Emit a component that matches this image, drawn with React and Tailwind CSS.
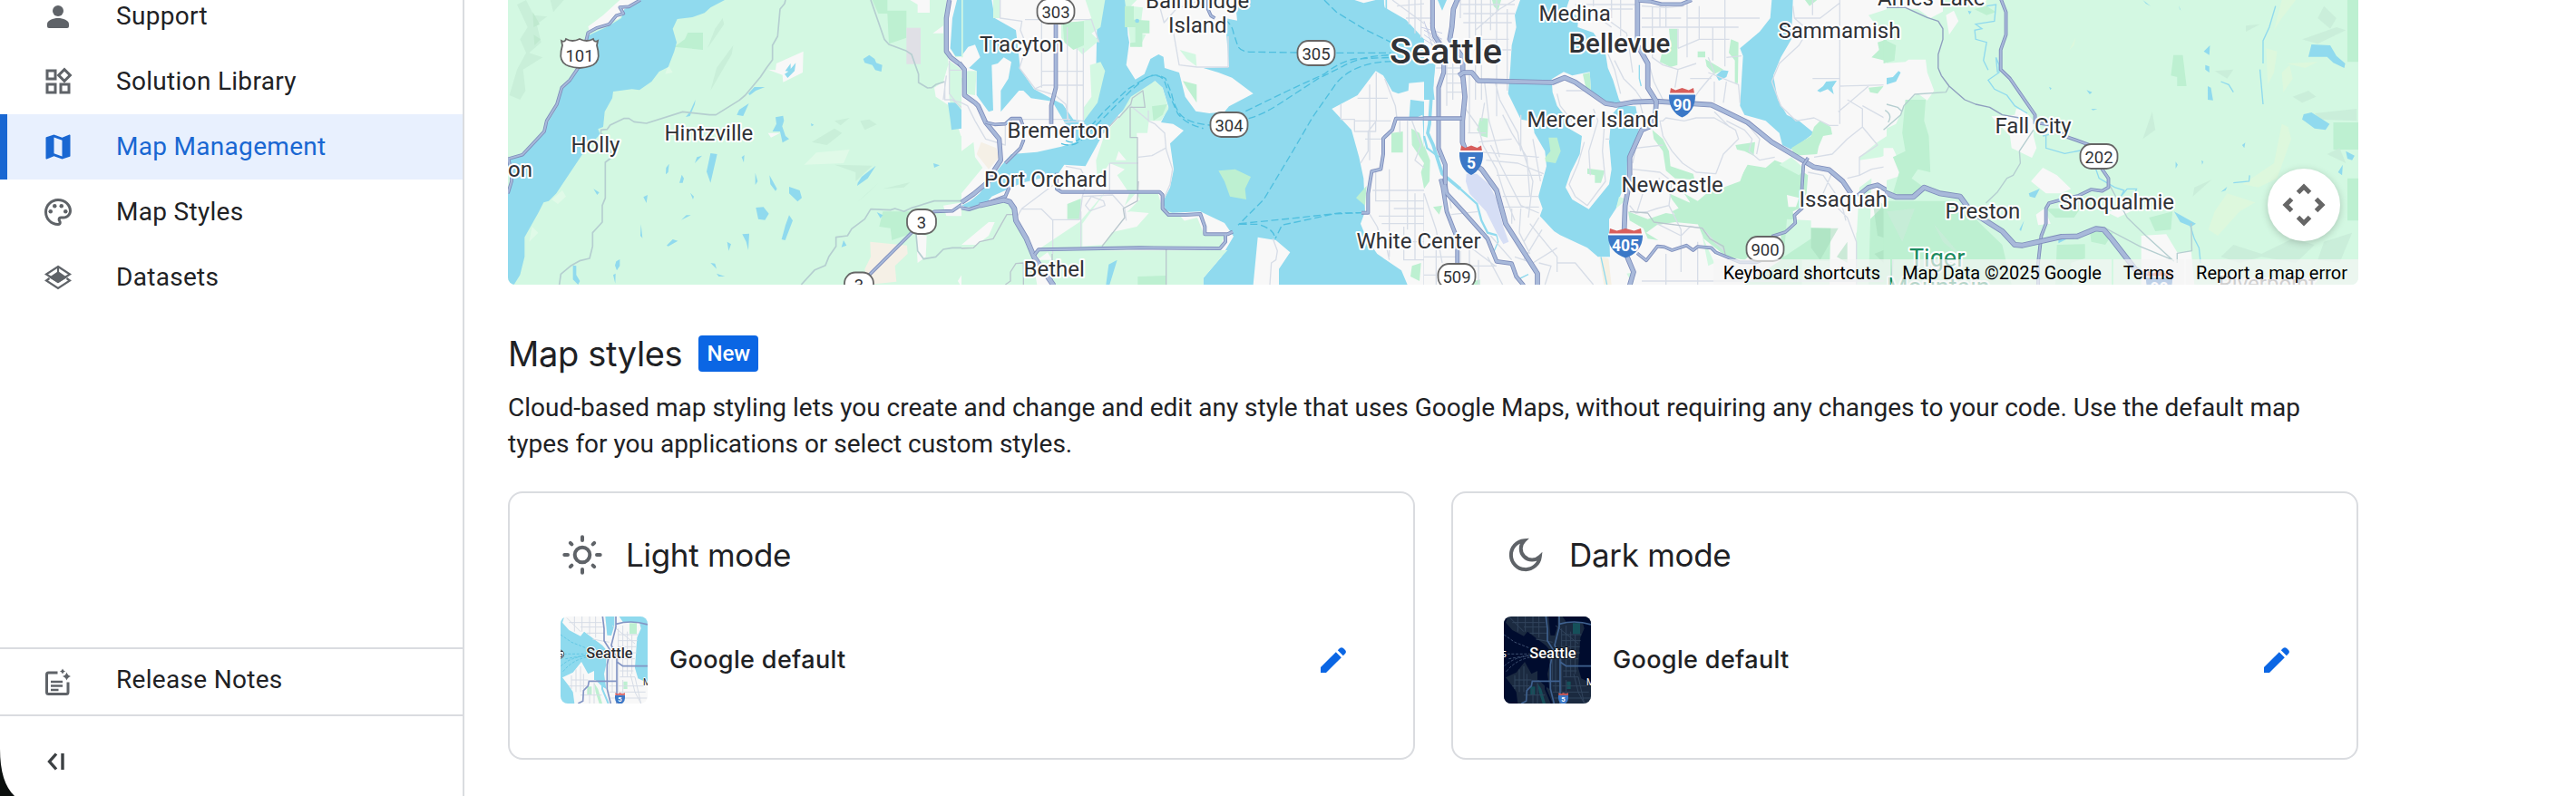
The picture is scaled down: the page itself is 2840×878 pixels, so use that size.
import { MdMap, MdOutlinePalette, MdOutlineWidgets } from 'react-icons/md';

const WATER = '#90daee';
const LAND = '#f8f8f8';
const GREEN = '#d3f8e2';
const PARK = '#bdf0d1';

/* ---------- icons ---------- */

const PersonIcon = () => (
  <svg viewBox="0 0 36 36" className="size-9" fill="currentColor">
    <circle cx="18" cy="12" r="6" />
    <path d="M6 29v-2.500c0-4 6.500-6.500 12-6.500s12 2.500 12 6.500V29a2 2 0 0 1-2 2H8a2 2 0 0 1-2-2Z" />
  </svg>
);

const DatasetsIcon = () => (
  <svg viewBox="0 0 36 36" className="size-9" fill="none" stroke="currentColor" strokeWidth="2.200">
    <path d="m18 6 13 8.500-13 8.500-13-8.500Z" />
    <path d="m8.500 19-3.500 2.500L18 30l13-8.500-3.500-2.500" />
    <path d="M18 6v8" />
    <path d="m18 12.500 8 5.500-8 5-8-5Z" fill="currentColor" />
  </svg>
);

const ReleaseIcon = () => (
  <svg viewBox="0 0 36 36" className="size-9" fill="none" stroke="currentColor" strokeWidth="3">
    <path d="M18 8.500H8a2 2 0 0 0-2 2V30a2 2 0 0 0 2 2h19.500a2 2 0 0 0 2-2V19" transform="translate(-.5 -.5)" />
    <path d="M10 18h13M10 22.500h13M10 27h8.500" strokeWidth="2.600" />
    <path d="M27.500 7.500q1 3.500 4.500 4.500-3.500 1-4.500 4.500-1-3.500-4.500-4.500 3.500-1 4.500-4.500ZM23 3.500q.7 2.300 3 3-2.300.7-3 3-.7-2.300-3-3 2.300-.7 3-3Z" fill="currentColor" stroke="none" />
  </svg>
);

const CollapseIcon = () => (
  <svg viewBox="0 0 20 20" className="size-5" fill="none" stroke="currentColor" strokeWidth="3.400">
    <path d="M10 1.500 2.500 10l7.500 8.500M17 1v18" />
  </svg>
);

const SunIcon = () => (
  <svg viewBox="-24 -24 48 48" className="size-12" fill="none" stroke="currentColor" strokeWidth="4" strokeLinecap="round">
    <circle r="8.300" />
    <path d="M0-19.700v3.700M0 16v3.700M-19.700 0h3.700M16 0h3.700M-13.200-13.200l1.600 1.600M13.200-13.200l-1.600 1.600M-13.200 13.200l1.600-1.600M13.200 13.200l-1.600-1.600" />
  </svg>
);

const MoonIcon = () => (
  <svg viewBox="-24 -24 48 48" className="size-12" fill="none" stroke="currentColor" strokeWidth="4">
    <path d="M-1.500-15.800A16 16 0 1 0 15.800 2 A11.800 11.800 0 0 1-1.500-15.800Z" />
  </svg>
);

const PencilIcon = () => (
  <svg viewBox="0 0 28 28" className="size-7 text-[#0b66e4]" fill="currentColor">
    <path d="M0 28v-6L16.800 5.200l6 6L6 28Z" />
    <path d="m18.800 3.200 2.200-2.100q2-1.800 4 0l2 2q1.800 2 0 4l-2.200 2.100Z" />
  </svg>
);

/* ---------- map pieces ---------- */

const Highway = ({ d, w = 12 }) => (
  <g fill="none" strokeLinejoin="round">
    <path d={d} stroke="#7d8cba" strokeWidth={w} />
    <path d={d} stroke="#a8b9da" strokeWidth={w - 5} />
  </g>
);

const Minor = ({ d, color = '#d7dde7', w = 4 }) => (
  <path d={d} fill="none" stroke={color} strokeWidth={w} strokeLinejoin="round" />
);

const Ferry = ({ d }) => (
  <path d={d} fill="none" stroke="#4fbfdf" strokeWidth="4" strokeDasharray="24 11" />
);

const WestTile = () => (
  <g transform="translate(550 0) scale(.33333)">
    <path fill={GREEN} d="M30 0H1562V942H30Z" />
    <path fill="#c9efd9" d="M60 15 90 0 115 50 160 55 125 80 140 140 100 175 145 190 80 230 88 300 70 330 35 315 60 230 90 175 70 130 95 90ZM170 0 215 0 180 40ZM1110 400 1160 390 1130 415ZM1035 470 1110 425 1135 440 1085 480ZM1110 545 1235 548 1180 600 1180 570ZM740 60 745 80 690 160 715 95ZM775 150 770 180 700 300 720 225ZM1195 400 1225 395 1250 412 1210 430ZM1480 440 1450 500 1445 520ZM1255 605 1185 670 1220 640ZM1360 603 1270 625 1340 620Z" />
    <path fill="#e0fae8" d="M1050 505 1160 495 1140 540 1010 545ZM210 630 222 650 195 675 175 660ZM110 750 130 770 100 800ZM560 215 575 240 550 245Z" />
    <path fill="#bfe9cf" d="M112 40 135 80 115 90ZM115 115 138 130 118 150Z" />
    <path fill={PARK} d="M625 108H675V165L580 155 615 130ZM1235 0H1285V35H1348V125L1290 145 1285 45 1255 45ZM1270 700 1380 700 1370 770 1300 795 1295 755 1258 750Z" />
    <path fill={LAND} d="M400 0H466L395 62 300 105 295 88 345 50ZM1360 0H1425V42H1385V15ZM890 230 915 232 918 210 1007 170 1005 240 940 272 938 248ZM1470 85 1470 110 1435 110ZM1480 0H1520L1495 160 1510 190 1560 185V942H1525L1515 925 1555 860 1560 840V340L1540 315 1530 230 1490 200 1470 270 1440 290 1445 320 1490 350 1495 380 1540 440 1560 460 1560 720 1480 715 1470 680 1560 665 1560 640 1470 600 1560 550 1490 330ZM1530 490 1548 495 1545 535 1525 530ZM1380 775 1415 780 1412 850 1385 870ZM890 440 930 440 900 455Z" />
    <path fill={GREEN} d="M1562 470V660L1440 668V440L1495 430ZM1562 715V860L1510 942H1430L1420 850 1440 715Z" />
    <path fill="#e0e0e6" d="M1348 92H1395V212H1348Z" />
    <path fill="#f5f0e6" d="M1228 800 1350 812 1352 840 1310 880 1315 932 1220 942 1210 890 1230 850Z" />
    <path fill={WATER} d="M466 0H747L700 25 680 43 640 57 590 63 575 95 588 140 580 170 560 222 530 237 505 270 465 298 440 295 378 303 375 325 350 370 345 420 328 427 335 445 300 480 275 512 230 580 190 640 165 665 148 670 130 705 85 785 85 850 70 910 50 942H30V640L45 600 35 575 30 525 78 512 148 440 165 400 195 350 208 290 235 270 262 230 290 180 295 118 360 88 405 60 415 30 440 20Z" />
    <path fill={WATER} d="M1515 0H1562V160L1545 187 1510 185 1493 160 1500 60ZM1485 340 1510 340 1535 370 1530 425 1497 430 1493 395ZM1205 195 1225 182 1243 195 1248 208 1268 215 1265 237 1245 232 1235 215 1210 208ZM947 235 965 210 965 228 982 208 978 235 955 258 945 245 958 236ZM825 310 845 288 880 288 850 300 830 315ZM827 342 795 363 787 380 808 384ZM650 330 632 370 618 387 632 384 648 345ZM915 388 940 383 943 400 937 418 948 450 960 460 938 472 930 435 905 435 918 410ZM700 507 722 510 700 605 687 568ZM648 540 655 520 672 515ZM553 555 563 542 560 570 552 577ZM605 578 612 590 608 605 597 605ZM803 520 812 513 810 538ZM895 580 920 625 915 632 898 610ZM848 572 856 600 848 612ZM960 618 995 630 1002 655 988 667 960 640ZM850 687 875 685 893 707 880 728 858 725ZM960 712 972 730 947 795 935 792 948 745ZM805 775 828 773 825 828 818 800ZM555 812 575 792 592 797 560 815ZM603 728 620 712 635 712ZM313 625 332 637 325 645ZM388 865 400 858 400 880 390 895 384 878ZM700 870 715 872 720 890ZM470 742 475 788 468 780ZM245 878 256 880 256 910 268 930 262 942 245 925ZM378 910 386 905 385 938ZM720 905 748 915 727 915ZM1250 702 1270 712 1262 722ZM1140 795 1150 812 1133 818ZM1187 605 1200 585 1247 548 1220 590 1185 615ZM1437 540 1458 547 1440 555ZM478 652 492 645 488 672ZM755 800 768 808 760 830ZM633 638 645 650 642 660ZM1032 408 1042 413 1034 418Z" />
    <Minor color="#b5ced0" w={5} d="M948 0 945 12 930 30 922 120 905 150V198L885 225 865 255 815 315 795 332 718 380H697L608 370 488 408 447 403 430 392H413L368 414 358 428 338 430 337 440 375 480 368 525 352 537V655L342 680V735L310 770V815L300 855 267 863 240 878 205 907 200 942M1230 0 1275 130 1290 147 1345 167 1365 180 1388 245V273L1418 291 1432 290 1445 280 1475 270M1000 942 1045 893 1080 878 1092 848 1115 815V785L1153 780 1167 757 1210 725 1230 692 1295 695 1310 690 1340 700 1365 688 1440 665H1562M1380 775 1385 830 1405 857 1445 850 1470 825 1500 820H1562" />
    <Minor d="M1490 200V310L1510 335 1555 345M1490 232H1560M1475 270V330H1500L1560 380M1480 250 1470 330" />
    <Highway d="M468 0 430 22 400 24 412 45 388 52 365 80 325 92 295 108 285 150 262 225 235 265 208 290 192 345 158 400 150 435 78 512 30 526M32 528 42 570V600L30 640" w={11} />
    <Highway d="M1490 0 1480 60V170L1495 190 1540 225V310L1565 333" w={16} />
    <Highway d="M1562 655 1500 698 1440 700 1370 765 1215 920M1520 680 1562 693" w={11} />
  </g>
);

const SoundTile = () => (
  <g transform="translate(1060 0) scale(.33333)">
    <path fill={WATER} d="M0 0H1562V942H0Z" />
    <path fill={LAND} d="M100 0H475L455 150 475 235 440 330 405 400 370 395 335 345 305 330 240 295 195 230 180 100 110 60ZM540 0H905L912 68 872 60 885 222 800 225 850 240 895 257 965 310 885 352 870 370 820 375 775 368 740 320 720 240 672 225 668 188 652 180 625 195 605 245 575 263 545 215 555 140 540 60ZM0 185 22 155 45 148 62 190 25 225 50 235 50 315 90 370 105 365 100 215 120 210 140 190 165 205 155 260 130 300 130 370 190 300 205 300 230 325 300 335 350 420 370 440 380 470 330 485 250 503 165 510 130 550 60 640 0 690ZM0 690 60 680 100 640 200 605 320 575 340 545 410 550 470 440 520 380 600 300 640 268 665 290 685 355 660 405 700 410 735 432 690 475 702 560 690 620 665 670 680 705 790 700 870 738 900 782 860 850 800 920V942H0ZM1370 235 1395 250 1425 302 1445 310 1478 300 1480 275 1562 268V942H1475L1455 895 1375 840 1340 790 1320 740 1335 700 1330 590 1315 520 1290 430 1225 360 1310 315ZM1395 0H1562V150L1530 130 1470 65 1400 25ZM980 785 1040 795 1087 835 1050 890V942H965ZM1300 0H1370L1330 10Z" />
    <path fill={WATER} d="M1485 330 1562 340V450L1540 450 1560 500 1530 490 1525 380 1480 400ZM450 0H545L550 110 530 210 480 250 440 330 445 240Z" />
    <path fill={GREEN} d="M0 0H5V190H0ZM105 0H128V60H105ZM410 0 475 0 460 90 430 110 455 135 400 180 380 160 330 130 330 80 400 70 430 60ZM425 215 460 205 475 235 450 340 405 400 405 355 430 320ZM560 320 640 268 665 290 685 360 660 400 620 400 615 440 580 440 585 630 540 680 555 640 515 580 540 560 490 540 450 600 445 530 475 440 520 390ZM0 500 40 470 45 520 70 555 0 640ZM0 690 130 660 160 670 185 740 230 830 250 942H0ZM255 825 390 735 480 630 400 740 400 815 465 810 640 650 660 700 720 710 820 830 790 820 270 835ZM465 815 530 720 590 660 580 640 650 640 665 690 720 715 700 740 600 800ZM700 740 780 720 800 770 870 780 855 820 590 812ZM240 830 880 828 860 850 800 920V942H310ZM540 0H580L560 20 600 25 590 110 610 115 590 155 560 150ZM20 235 50 235 45 315 5 310 0 260ZM722 165 775 180 778 220 745 195Z" />
    <path fill={PARK} d="M335 75 405 70V150L370 165 340 140ZM540 20 570 20 570 65 622 68V110H598V155H558V142L575 140V90H540ZM732 268 778 280V340L745 290ZM350 675 395 657V725H350ZM1422 440 1460 435V505H1422ZM1488 425 1515 440 1540 520 1545 600 1530 625 1520 570 1530 540 1490 480ZM583 915 675 912V942H583ZM850 565 905 560 957 585 938 625 942 660 888 650 870 600ZM1305 655 1340 615 1335 680ZM630 352 680 345 665 380 635 400ZM1490 880 1520 870 1515 930 1485 915Z" />
    <path fill="#f5f0e6" d="M50 510 65 470 115 490 125 520 90 560Z" />
    <path fill={LAND} d="M560 700 620 705 580 750 490 770 500 710ZM0 810 90 735 110 735 90 780 50 810ZM520 500 545 530 510 530ZM250 860 285 835 300 860Z" />
    <path fill={WATER} d="M487 875 515 860 490 942H478ZM0 680 60 650 130 605 200 605 100 650 80 675 30 685Z" />
    <circle cx="581" cy="69" r="7" fill={WATER} />
    <Minor d="M210 65H430L455 140M265 70V290M350 90V395M382 160V400M403 160V400M265 236H403M240 295 270 282H403M128 0V60L200 70 195 100 215 150 192 225 245 295 310 315 345 345 355 400M0 340 20 350 45 400 80 460 145 480V405M200 395H360M340 405 400 400M700 100 720 215 780 222 882 222V120M650 0 670 75 710 30 790 0M618 365V400L640 410 672 440 677 495 698 560 690 610 668 660M585 520 630 515 675 490M200 692H265L300 727H390L400 650 415 600 395 560 345 550M302 728V840M395 700V820M410 680 430 650 470 665 475 680 425 698ZM400 650 500 645 540 690 545 730M490 540H585M490 540V640M620 400 560 350M185 715 200 690 320 600" />
    <Minor color="#b9c6cd" d="M0 822 40 820 60 800 105 790 130 745 150 710 180 710M300 840V942M205 942V870L180 872 162 900V930L145 942M465 815 540 720 535 690 582 665 585 600M677 825V942M520 390 560 345 565 325 600 300 607 355H558V455H582V630M520 385 470 440" />
    <Minor d="M1310 325H1410M1350 280V530M1255 345V395H1300V435H1370V400M1372 240V400L1345 435V500L1320 540M1400 260 1435 350 1440 390M1300 400 1420 400M1335 460H1390M1370 560V665H1540M1360 630H1560M1415 560V850M1475 400V760M1430 690H1560M1380 715H1560M1390 740H1560M1435 800H1560M1450 400V440M1490 400 1520 480 1500 530 1560 580M1463 750V860H1560M1500 640V860M1530 640V942M1400 790 1415 860M1345 700 1375 750 1390 800M1425 0 1560 100M1440 20 1560 10M1470 60 1560 60M1480 0V80M1500 0V110M1520 0V125M1535 30V135M1030 790 1045 830 1040 860 1025 870 1020 942" />
    <path d="M1385 0V30M1395 0V35M1405 0V35" stroke={WATER} strokeWidth="5" />
    <Ferry d="M870 65Q895 80 900 110L915 155Q925 172 960 172L1110 174M1240 175H1420M1200 0 1240 40 1330 95 1425 142M330 475Q370 490 400 460L480 380 560 300 600 265Q640 235 675 260L695 310Q705 360 730 385 760 410 825 414M345 465Q370 480 395 455L470 370 550 295 610 258Q650 238 670 265L690 320 715 375Q740 410 800 425M940 368 1080 300 1200 245Q1250 205 1300 195L1425 190M950 392Q1000 380 1080 325L1180 260 1260 220Q1320 185 1420 182M1425 203Q1300 205 1240 275L1160 390 1090 510 1000 660 915 745M920 740 1100 722 1250 705 1330 704M920 742H980Q1040 760 1035 790M1330 704 1230 708 1060 745 1038 790" />
    <Highway d="M-8 208 10 230V315L45 340 55 350 80 405 125 460 130 530 110 560 90 600 40 642 0 670" w={16} />
    <Highway d="M0 688 25 693 65 680 145 650 160 615 170 600" w={12} />
    <Highway d="M60 680 140 662 160 668 175 690 180 730 215 790 240 850 305 945" w={18} />
    <Highway d="M312 78V290L297 350V410" w={14} />
    <Highway d="M80 405 110 412 145 410 165 392H195L205 420V465L195 490 145 540" w={11} />
    <Highway d="M315 572V625L330 635H655L665 645V690L685 711H740L790 708 805 750V775H880L897 767M873 775V800L855 822 590 820 255 826 242 842" w={12} />
    <Highway d="M815 0V30L825 52 838 60" w={11} />
    <Highway d="M1562 392H1437L1425 430 1395 458V510L1387 560 1357 567 1345 640V704H1323" w={12} />
    <Highway d="M1558 0V120" w={10} />
  </g>
);

const CityTile = () => (
  <g transform="translate(1570 0) scale(.33333)">
    <path fill={LAND} d="M0 0H1562V942H0Z" />
    <path fill={WATER} d="M0 210H38L30 290 35 330 0 330ZM318 0H480L470 30 510 55 508 90 560 108 575 130 600 175 608 225 625 265 645 330 660 350 700 352 712 420 700 480 672 530 670 600 650 645 635 690 612 725V755L615 850H575L540 820 450 778 430 765 383 715 392 690 378 650 405 550 400 500 365 440 360 402 320 395 278 310 285 230 290 150 305 90 300 50ZM1150 0H1220L1215 130 1180 190 1155 250 1170 330 1200 380 1240 400 1290 440 1250 470 1215 495 1185 480 1175 440 1130 400 1060 380 1045 350 1055 185 1045 160 1110 105 1145 60ZM45 0H75L60 35ZM965 250 985 232 1007 235 1000 255 975 267ZM1300 300 1320 285 1330 270 1365 267 1350 290 1355 312 1335 295 1310 305Z" />
    <path fill={LAND} d="M425 305 422 262 462 238 490 250 548 238 552 300 600 345 645 352 620 380 612 470 620 560 612 610 545 692 490 660 468 620 485 570 515 510 522 450 470 420 470 390 440 350Z" />
    <path fill={PARK} d="M412 455 440 455 452 500 435 540 402 535 400 522 418 500ZM525 245 548 240 552 300 535 290ZM0 480 20 530 18 600 0 625ZM185 390 212 392 210 455 190 450 175 430ZM810 95H838V215L815 222 780 205 790 160 815 150ZM1015 130 1040 140 1038 275 1028 275V200L1008 175ZM930 195 990 230 960 245 935 220ZM905 170H930V190H905ZM540 557 598 565 585 605H565V580L540 575ZM755 430 790 460 810 500 815 550 890 575 895 595 830 590 800 565 790 500 760 460ZM1030 480 1095 470 1090 515 1060 500 1035 495ZM1070 545 1130 555 1160 530 1240 560 1270 580 1265 640 1240 690 1220 700 1225 740 1150 785 1060 860 1000 850 925 790 905 740 840 720 820 700 880 670 860 640 905 665 970 610 1040 600ZM810 640 900 680 950 740 880 735 850 700 820 660ZM675 700 740 725 800 705 860 715 930 745 830 735 770 745 735 770 775 795 740 790 725 755 680 730ZM1290 420 1310 400 1345 420 1350 445 1320 450 1305 485 1300 510 1225 515 1215 490 1280 450ZM1180 750 1345 755 1340 942H1060L1180 860ZM1430 770 1562 640V942H1430ZM1470 290 1520 285 1500 310 1475 305ZM1500 140 1562 120V210L1480 190 1505 165ZM1260 0 1300 0 1275 20ZM225 0 255 0 245 35 230 20ZM30 685 60 680 50 710ZM165 930 185 925 185 942H165Z" />
    <path fill={GREEN} d="M1470 50 1562 20V150L1500 90ZM1440 520 1500 470 1562 430V500L1510 520 1440 530ZM1215 520 1260 560 1240 580 1175 545ZM1440 620 1480 590 1470 942H1430V790ZM1200 725 1280 730V790L1190 850ZM1250 860 1340 865 1340 942H1250ZM645 650 635 690 670 660ZM670 905 700 900 690 942ZM920 780 960 870 940 880Z" />
    <path fill="#a6ddbb" opacity=".55" d="M1280 755 1370 755 1310 860 1280 820ZM1365 850 1400 800 1400 870ZM1480 640 1562 720V800L1500 780ZM1490 840 1562 810V900L1530 880Z" />
    <path fill="#f6f0e2" d="M580 850 610 855 620 942 595 942Z" />
    <path fill="#d6def5" d="M140 575 175 575 215 610 240 660 262 750 280 800 262 808 240 770 205 700 150 640 138 600Z" />
    <path fill="#f8f8f8" d="M930 575 1060 560 1045 600 990 620ZM1200 645 1240 655 1230 685 1205 685Z" />
    <path fill="none" stroke={WATER} strokeWidth="11" d="M30 210 25 300 18 410 12 440 30 480 60 575 120 625" />
    <path fill="none" stroke={WATER} strokeWidth="7" d="M120 625 175 675 190 730 210 770 240 778M0 450 10 490 50 520M1562 258Q1515 265 1530 305" />
    <path fill="none" stroke={WATER} strokeWidth="4" d="M240 778 245 800 232 830M585 850 605 942M712 215V260L718 285M310 925 345 908 320 920M20 260V400" />
    <Minor d="M0 60H20M120 0V60M150 0V210M170 0V330M190 0V330M220 0V100M240 0V385M275 30V300M120 15H300M130 45H300M130 75H290M40 225H130M75 205V350M95 210V330M55 245H130M75 275H125M75 305H125M165 130H280M165 165H290M150 245 150 440M200 270 215 400 250 520M235 270 250 330 310 440 320 500M170 100 250 30 300 0M130 350 180 420 195 480 240 560 265 640 300 730M145 440H205M200 340 190 400M150 500 380 520M205 530 310 540 395 575M180 470 290 460M220 480 280 600 320 680 380 705M260 380 290 440 340 520 350 650M320 380 320 480 360 600 345 720M360 460 385 600M240 580 390 580M260 650 380 650M265 685 380 685M290 740V690M320 690 315 770 350 840M350 740 440 850V900M440 870 500 870 560 942M330 800 380 720M390 760 330 860M0 640 20 700 40 760 60 870M75 600 90 690M90 710 180 700M0 850H105M40 800V942M0 910H110M120 830V942M150 820V900M115 880H240M180 860V942M210 850 260 942M130 800 235 880M220 780 290 860M300 850 360 870 440 820M380 870 420 880 400 942" />
    <Minor d="M500 15 700 15M560 0V20M600 30 690 30M620 0V60M650 0V120M600 60 670 110 680 170 690 240M720 20 800 25 860 20M755 20V190L790 215 840 230 900 210M720 90H1040M720 60 850 60M780 20V90M800 20V90M840 95V160M870 0V190M910 20V130M955 90V200M995 0V220M1000 190 1050 185M840 160 910 130H1010M870 60H1110M940 190 960 240 910 300 890 330M940 240 1040 280 1045 340M880 260H950M960 270V340M1000 270 990 340M840 230 830 290M620 90 580 60 555 30M630 200 660 260 700 300 720 330M605 170 630 230 650 310M790 330 760 270 745 215M715 345 730 400M740 400H790L800 390 860 400 900 390H960L1030 430 1040 460 990 510 965 575 900 570 855 540 820 500 790 450 780 400M1000 400 1060 430 1085 460 1075 500 1110 530 1160 520M960 370 1010 420M1060 400 1110 460 1100 510M690 560 780 570 820 600 810 680 770 690 740 700 700 705 680 680M690 540 700 490 790 480M705 700 730 620 780 590M810 680 850 760V900M770 740 850 780 880 750 920 755 960 800 995 830M905 800V942M800 840 800 942M720 930 1560 930M440 310 450 350 490 400M470 300 530 300 560 320M560 360 575 400 545 500 550 580M600 370 590 500 600 600 540 680 500 650 480 610 510 540 530 470M615 460 600 460M1220 20 1225 60 1270 100 1240 150 1175 210 1150 270 1180 350 1230 400 1290 390 1340 415 1370 415M1225 60 1310 60 1375 10M1375 0V410M1285 260H1375M1285 0V50M1375 285 1560 280M1470 285 1400 345 1370 370M1400 330 1450 360 1450 420 1400 460 1350 510 1290 520M1450 350 1540 400 1560 440M1450 420 1500 480 1440 520 1440 580 1480 560 1562 545M1440 580 1400 590M1350 570 1320 640 1400 720 1430 800V942M1270 570 1320 580 1380 670 1395 730" />
    <Minor color="#b9c6cd" d="M680 700 740 705 760 735 840 745 920 755 945 790 990 815 998 850" />
    <path fill="none" stroke="#c9d0e6" strokeWidth="3" d="M0 100 60 130M0 115 50 150M0 130 40 155M5 85 50 170M20 75 65 150M-10 90 60 110M0 70 30 160" />
    <Highway d="M28 -5V90L35 120 65 165V240L48 290V490L70 545V610L68 640" w={15} />
    <Highway d="M112 -5 97 30 92 90 85 130 128 190V250L135 320 127 400V470L150 530 190 560 240 630 270 740 375 905V945" w={17} />
    <Highway d="M55 592 62 620 75 700 110 790V875M68 610 75 640 130 700 210 790 240 865 290 872 305 915 330 945" w={14} />
    <Highway d="M-2 392H125" w={14} />
    <Highway d="M115 250 130 240H158L180 267 425 273 465 257 500 272 600 342 635 348 690 338 765 335 950 347 1070 405 1150 470 1290 553 1340 562 1385 600 1412 640" w={17} />
    <Highway d="M1435 648 1470 620 1500 612 1562 648" w={16} />
    <Highway d="M706 -5V150L740 210V290L768 335 765 390 755 415 720 430 680 520V600L665 680 662 760M672 850 693 900 680 945" w={17} />
    <Highway d="M710 2 750 5 785 14H850L885 0" w={13} />
    <Highway d="M705 838 735 862 772 815 795 817 820 828 868 812 890 828 905 816 950 820 965 835 1045 868H1100L1130 855M1150 782 1195 768 1228 738 1225 712 1250 690V620L1255 545 1270 522" w={11} />
  </g>
);

const EastTile = () => (
  <g transform="translate(2080 0) scale(.34439 .33333)">
    <path fill={GREEN} d="M0 0H1515V942H0Z" />
    <path fill={LAND} d="M-10 0H180V38L140 60 100 30 -10 25ZM190 50 215 35 230 70 200 115ZM-10 210 60 205 70 197H125L130 240 152 300 130 332 100 310 60 340 30 410-10 430ZM335 385 410 380 415 360 440 365 470 400 470 450 480 490 465 522 400 490 395 450ZM-10 490 20 490 45 545 50 580-10 600ZM462 600 500 555 545 580 590 625 560 640 510 640ZM478 710 505 690 525 740 485 745ZM815 780 895 775 930 835 975 832 985 942H815ZM700 700 800 690 740 720ZM-10 640 5 640V690H-10Z" />
    <path fill={PARK} d="M60 330 125 330 120 400 135 450 140 570 100 560 80 590 120 620 100 650 20 640 40 570 20 520 60 500 50 440ZM-10 665 200 665 280 720 370 810 400 942H-10ZM280 30 320 20 350 40 320 50ZM918 182 948 182 960 285 930 285 930 255 910 250ZM1475 0H1512V205H1475ZM1430 405H1512V495H1430ZM545 810 635 808V855L590 870 595 942H540ZM510 690 620 690 600 720 540 720ZM650 760 725 770 700 810 655 800ZM840 720 915 700 910 760 860 765ZM-10 130 30 150 25 200-10 210ZM1475 590H1512V730H1475Z" />
    <path fill="#c8ecd8" opacity=".85" d="M1330 130 1440 90 1470 100 1380 145ZM1380 60 1400 20 1440 60 1420 95ZM1300 320 1350 300 1375 320 1330 340ZM1150 85 1195 80 1150 105ZM1050 235 1110 230 1090 260ZM1370 375 1505 360 1505 400 1390 395ZM1070 850 1110 810 1200 840 1300 790 1370 810 1310 870 1200 850 1130 870ZM1400 800 1490 770 1450 870 1380 860ZM850 370 860 430 820 460ZM1040 595 980 650 985 620ZM1410 510 1450 490 1470 540ZM0 700 90 690 50 800ZM150 740 250 860 180 800Z" />
    <path fill="#ddf8dd" d="M1265 0H1310L1265 60 1240 100ZM1215 160 1250 170 1240 240 1220 280ZM1290 215 1300 260 1270 305 1265 240ZM1265 410 1285 420 1295 460 1250 590 1190 620 1140 610 1240 540ZM1090 640 1180 670 1130 700 1060 780 1030 760 1050 700ZM1280 210 1380 205 1340 225ZM605 125 600 150 585 165Z" />
    <path fill={WATER} d="M1360 147 1420 150 1440 185 1468 210 1465 225 1430 208 1410 188 1350 188ZM1335 378 1360 372 1418 410 1405 430 1370 425 1330 395ZM1015 170 1035 150 1033 182ZM1020 215 1033 220V240L1020 230ZM1028 285 1038 290 1045 332 1028 330ZM1470 500 1498 515 1490 530 1475 525ZM1460 545 1458 580 1445 570ZM455 640 490 625 475 655 458 650ZM440 730 430 765 425 760ZM640 298 658 305 650 312ZM1138 480 1148 472 1145 490ZM925 535 932 545 925 558ZM1008 530 1014 535 1010 545ZM260 35 272 38 265 48ZM655 360 675 361 660 365ZM820 0 845 20 830 12ZM520 287 528 292 524 298ZM935 18 942 35 938 30ZM550 790 575 792 550 805ZM1070 635 1090 618 1085 630ZM920 700 990 740 975 750 940 735ZM0 258 20 255 38 235 45 240 30 270 0 280Z" />
    <path fill="none" stroke={WATER} strokeWidth="4" d="M320 20 350 15 345 70 285 80 305 95 282 100 285 130 320 140 310 200 325 232M350 190 360 215 360 240 325 265 345 295 385 315 410 350 450 375M350 190 355 240M510 450V490L570 508 620 498M670 560 680 590 730 620 760 630 750 650 770 625 800 625 795 640M500 450 520 445M970 740 985 790 1000 820 1005 870M1245 20 1225 90 1205 135 1205 210M1195 230 1205 345M1070 270 1095 280 1110 305M1110 605 1160 600 1162 580" />
    <Minor color="#b5ced0" d="M470 430 425 500 428 540 405 580 385 590 355 635 318 672M-10 430 45 380 55 350 90 312 190 305 200 285M0 345 35 355 50 370M-5 365Q20 380 5 405M700 755 810 815 915 860M715 615 770 720 830 780 920 865M975 738 977 830 930 838V870M20 860 15 942" />
    <Minor color="#8f9fbf" w={4} d="M0 25H60L130 58 165 70 180 95V130L165 180V225L175 250 200 285 250 330 285 345 330 355 370 380 425 390" />
    <Highway d="M365 -5 382 40V115L365 165V230L395 260 475 380V410M490 408 520 412 575 452 650 480 690 560 710 590V620L690 632 655 627 615 647 555 662 520 672 510 690V740L495 780 485 870V942" w={11} />
    <Highway d="M-5 637 30 652H85L120 620 170 640 235 650 270 700 370 765 410 810 435 812 560 783 610 782 670 757 695 760 720 790 795 890 870 942" w={18} />
  </g>
);

const RoadBadge = ({ x, y, label }) => {
  const w = label.length > 1 ? 41 : 32;
  return (
    <g>
      <rect x={x - w / 2} y={y - 13.5} width={w} height="27" rx="12" fill="#fff" stroke="#666" strokeWidth="1.800" />
      <text x={x} y={y + 7} fontSize="18.500" textAnchor="middle" fill="#303236">{label}</text>
    </g>
  );
};

const Interstate = ({ x, y, w, label }) => (
  <g transform={`translate(${x - w / 2} ${y})`}>
    <path d={`M2 0 ${w * 0.25} 2.500 ${w / 2} 0 ${w * 0.75} 2.500 ${w - 2} 0 ${w - 1} 6H1Z`} fill="#d85f5d" />
    <path d={`M0 6.500H${w}`} stroke="#fff" strokeWidth="2" />
    <path d={`M0 7.500H${w}C${w + 0.5} 20 ${w * 0.8} 29 ${w / 2} 32.500C${w * 0.2} 29 -.5 20 0 7.500Z`} fill="#3b78c7" />
    <text x={w / 2} y="25" fontSize="17.500" fontWeight="700" fill="#fff" textAnchor="middle">{label}</text>
  </g>
);

const places = [
  ['on', 560, 195],
  ['Holly', 629.5, 167.7],
  ['Hintzville', 732.5, 155],
  ['Tracyton', 1080, 56.7],
  ['Bainbridge', 1263, 8.5],
  ['Island', 1288, 36.3],
  ['Bremerton', 1110.5, 151.7],
  ['Port Orchard', 1085, 205.7],
  ['Bethel', 1128.5, 304.7],
  ['White Center', 1495.5, 274],
  ['Medina', 1696.5, 22.7],
  ['Mercer Island', 1683.5, 139.5],
  ['Newcastle', 1787.5, 211.5],
  ['Issaquah', 1983.5, 227.7],
  ['Sammamish', 1960.5, 41.7],
  ['Ames Lake', 2070, 5.5],
  ['Fall City', 2199.5, 146.7],
  ['Preston', 2144.5, 240.7],
  ['Snoqualmie', 2270.5, 230.7],
];

const MapCanvas = () => (
  <svg viewBox="560 0 2040 314" className="block h-[314px] w-[2040px] font-['Roboto',sans-serif]">
    <WestTile />
    <SoundTile />
    <CityTile />
    <EastTile />
    <path d="M619 45q4 2 5-2 7 4 15 0 8 4 15 0 1 4 5 2l-1 5q4 14-1 19-4 5-18 6-14-1-18-6-5-5-1-19Z" fill="#fff" stroke="#666" strokeWidth="1.800" />
    <text x="639" y="68" fontSize="18.500" textAnchor="middle" fill="#303236">101</text>
    <RoadBadge x={1164} y={12.5} label="303" />
    <RoadBadge x={1451} y={58.5} label="305" />
    <RoadBadge x={1355} y={137.5} label="304" />
    <RoadBadge x={1016} y={244.5} label="3" />
    <RoadBadge x={947} y={314} label="3" />
    <RoadBadge x={1606} y={304.5} label="509" />
    <RoadBadge x={1946} y={274.5} label="900" />
    <RoadBadge x={2314} y={172.5} label="202" />
    <Interstate x={1622} y={160.5} w={26} label="5" />
    <Interstate x={1854.5} y={97} w={29} label="90" />
    <Interstate x={1792} y={252} w={38} label="405" />
    <Interstate x={2380.5} y={299} w={29} label="90" />
    <g fill="#303236" stroke="#fff" strokeWidth="4" strokeLinejoin="round" paintOrder="stroke" fontSize="24">
      {places.map(([name, x, y]) => (
        <text key={name} x={x} y={y}>{name}</text>
      ))}
      <text x="1532" y="69.500" fontSize="39.500" fontWeight="500">Seattle</text>
      <text x="1729.500" y="57.500" fontSize="29.500" fontWeight="500">Bellevue</text>
      <text x="2105" y="293.500" fontSize="27" fill="#1b8b60">Tiger</text>
      <text x="2080" y="326" fontSize="27" fill="#1b8b60">Mountain</text>
      <text x="2446" y="321" fontSize="24" fill="#777">Riverpoint</text>
    </g>
  </svg>
);

const thumbThemes = {
  light: { land: '#f8f8f8', water: '#8fdaee', road: '#8395c4', minor: '#d6dce6', park: '#bdf0d1', ferry: '#4fbfdf', text: '#2c2e31', halo: '#fff' },
  dark: { land: '#1b2a40', water: '#000c2e', road: '#3f618f', minor: '#31445c', park: '#15505a', ferry: '#5b7191', text: '#fff', halo: '#10151f' },
};

const Thumb = ({ theme }) => {
  const c = thumbThemes[theme];
  return (
    <svg viewBox="234 450 288 288" className="size-24 rounded-lg font-['Roboto',sans-serif]">
      <path fill={c.land} d="M234 450H522V738H234Z" />
      <path fill={c.water} d="M234 450H247L240 470 262 495 300 515 312 500 345 525 372 545 385 560V610L378 640 385 690 370 680 350 660H345V630L325 640 303 600 275 635 240 652 262 680 275 700 280 738H234ZM382 450H412V480L402 513 388 512 385 480ZM428 450H522V670L490 655 480 620 487 520 500 490 495 470 440 468Z" />
      <path fill={c.park} d="M462 472H486V508H462ZM322 682H337V708H322ZM345 670 358 690 372 738H362L350 700ZM442 665H455V690H442Z" />
      <path fill="none" stroke={c.minor} strokeWidth="3" d="M255 455 300 500M280 450V500M262 470H370M305 450V500M330 450V510M350 450V520M300 485H375M320 505H380M340 525 395 535M425 490V700M440 480V650M455 500V650M470 510V640M425 510H490M425 530H488M425 550H485M425 570H485M425 590H480M395 590V660M405 590V700M430 630H475M430 650H480M270 660H325M270 645V690M285 625V700M300 615V700M262 680H320M310 640V690M395 680H510M395 700H515M400 720H520M440 660V738M465 640 480 700 500 738M480 650 500 738M330 690V738M345 670V738M300 710H370M405 480 480 540" />
      <path fill="none" stroke={c.water} strokeWidth="6" d="M372 620V690L392 738" />
      <path fill="none" stroke={c.ferry} strokeWidth="2" strokeDasharray="9 5" d="M234 510 270 535 320 555M245 574H325M320 580Q265 585 234 615M320 585Q270 595 240 635M250 590 320 578" />
      <path fill="none" stroke={c.road} strokeWidth="5" d="M373 450 378 490V530L397 560 388 610V690L400 738M417 450V485L402 545 420 590V738M417 475Q470 460 522 477M420 600 440 614H522M420 664H328L325 680 310 695 308 730 292 738" />
      <path fill={theme === 'light' ? '#fff' : c.water} stroke={theme === 'light' ? '#555' : 'none'} strokeWidth="3" d="M225 560q20 0 20 15t-20 15Z" />
      <text x="227" y="584" fontSize="26" fontWeight="500" fill={c.text}>5</text>
      <path d="M415 703l8 3 8-3 8 3 8-3v7h-32Z" fill="#d85f5d" />
      <path d="M414 711h33q2 20-10 27h-13q-12-7-10-27Z" fill="#3b78c7" />
      <text x="430" y="733" fontSize="23" fontWeight="700" fill="#fff" textAnchor="middle">5</text>
      <g paintOrder="stroke" strokeLinejoin="round" fill={c.text} stroke={c.halo}>
        <text x="319" y="588" fontSize="49" fontWeight="500" strokeWidth="6">Seattle</text>
        <text x="507" y="678" fontSize="30" strokeWidth="4">M</text>
      </g>
    </svg>
  );
};

/* ---------- page ---------- */

const navItems = [
  { label: 'Support', icon: <PersonIcon /> },
  { label: 'Solution Library', icon: <MdOutlineWidgets size={36} /> },
  { label: 'Map Management', icon: <MdMap size={36} />, active: true },
  { label: 'Map Styles', icon: <MdOutlinePalette size={36} /> },
  { label: 'Datasets', icon: <DatasetsIcon /> },
];

const NavItem = ({ label, icon, active }) => (
  <a
    className={
      active
        ? 'flex h-[72px] items-center border-l-8 border-[#1967d2] bg-[#e8f0fe] pl-[38px] text-[#1967d2]'
        : 'flex h-[72px] items-center pl-[46px] text-[#202124]'
    }
  >
    <span className={active ? 'text-[#1967d2]' : 'text-[#5f6368]'}>{icon}</span>
    <span className="ml-[46px]">{label}</span>
  </a>
);

const Sidebar = () => (
  <aside className="flex w-[512px] shrink-0 flex-col border-r-2 border-[#dadce0] text-[28px] tracking-[0.3px]">
    <nav className="-mt-[18px] flex-1">
      {navItems.map((item) => (
        <NavItem key={item.label} {...item} />
      ))}
    </nav>
    <div className="flex h-[76px] items-center border-y-2 border-[#dadce0] pl-[46px] text-[#202124]">
      <span className="text-[#5f6368]"><ReleaseIcon /></span>
      <span className="ml-[46px] pb-1">Release Notes</span>
    </div>
    <div className="h-[88px] pt-10 pl-[52px] text-[#3c4043]">
      <CollapseIcon />
    </div>
  </aside>
);

const MapPanel = () => (
  <div className="relative h-[314px] w-[2040px] overflow-hidden rounded-b-lg">
    <MapCanvas />
    <button className="absolute top-[186px] right-5 flex size-20 items-center justify-center rounded-full bg-white shadow-[0_2px_8px_rgba(0,0,0,0.2)]">
      <svg viewBox="-24 -24 48 48" className="size-12" fill="none" stroke="#666" strokeWidth="5">
        <path d="M-6.500-13.500 0-20l6.500 6.500M-6.500 13.500 0 20l6.500-6.500M-13.500-6.500-20 0l6.500 6.500M13.500-6.500 20 0l-6.500 6.500" />
      </svg>
    </button>
    <div className="absolute right-0 bottom-0 flex h-7 gap-[2px] text-[20px] leading-[30px] whitespace-nowrap text-black">
      <span className="bg-[#f5f5f5]/70 px-[11px]">Keyboard shortcuts</span>
      <span className="bg-[#f5f5f5]/70 px-[11px]">Map Data ©2025 Google</span>
      <span className="bg-[#f5f5f5]/70 px-[11px]">Terms</span>
      <span className="bg-[#f5f5f5]/70 pr-3 pl-[11px]">Report a map error</span>
    </div>
  </div>
);

const ModeCard = ({ title, icon, theme }) => (
  <section className="h-[296px] w-[1000px] rounded-2xl border-2 border-[#dadce0] px-14 pt-11">
    <div className="flex h-12 items-center">
      <span className="text-[#5f6368]">{icon}</span>
      <h3 className="ml-6 font-['Inter',sans-serif] text-[35px] tracking-[-0.3px]">{title}</h3>
    </div>
    <div className="mt-11 flex items-center">
      <Thumb theme={theme} />
      <span className="ml-6 flex-1 font-['Inter',sans-serif] text-[27px] font-medium tracking-[0.35px]">Google default</span>
      <button className="mr-[18px]"><PencilIcon /></button>
    </div>
  </section>
);

export default function App() {
  return (
    <div className="relative flex h-[878px] w-[2840px] overflow-hidden bg-white font-['Roboto',sans-serif] text-[#202124]">
      <Sidebar />
      <main className="ml-12">
        <MapPanel />
        <div className="mt-14 flex h-10 items-center">
          <h2 className="font-['Inter',sans-serif] text-[38px] tracking-[-0.35px]">Map styles</h2>
          <span className="ml-[18px] flex h-10 w-[66px] items-center justify-center rounded bg-[#0b66e4] text-[24px] font-medium text-white">New</span>
        </div>
        <p className="mt-5 w-[2020px] text-[28px] leading-10">
          Cloud-based map styling lets you create and change and edit any style that uses Google Maps, without requiring any changes to your code. Use the default map types for you applications or select custom styles.
        </p>
        <div className="mt-8 flex gap-10">
          <ModeCard title="Light mode" theme="light" icon={<SunIcon />} />
          <ModeCard title="Dark mode" theme="dark" icon={<MoonIcon />} />
        </div>
      </main>
      <svg viewBox="0 0 16 52" className="absolute bottom-0 left-0 h-[52px] w-4">
        <path d="M0 0Q0 37 16 52H0Z" fill="#0b0f0e" />
      </svg>
    </div>
  );
}
